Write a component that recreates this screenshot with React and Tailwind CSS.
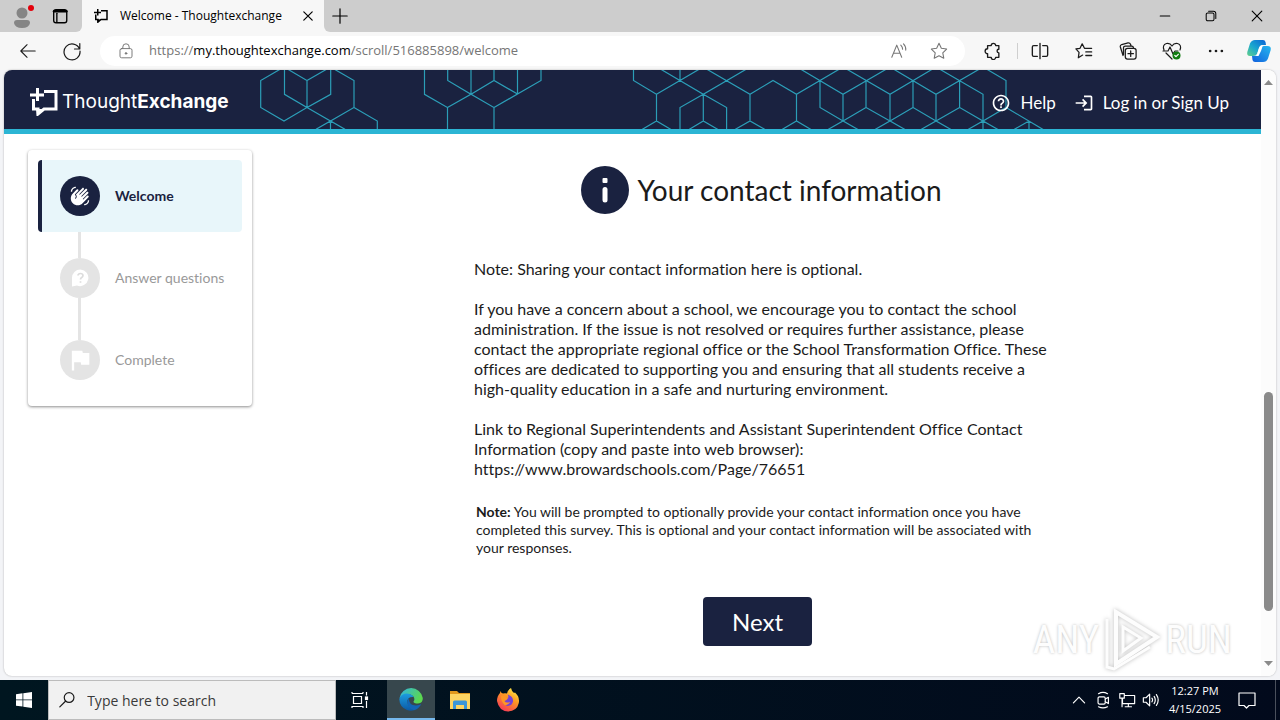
import React from 'react';
import { MdWavingHand, MdFlag, MdHelpOutline, MdLogin } from 'react-icons/md';

const honeycomb = [
  'M284 67L307 80.5V107.5L284 121L260.7 107.5V80.5Z',
  'M307 80.5L330.5 67L354 80.5V107.5L330.5 121L307 107.5',
  'M284.5 66V94.3L307 107.5L330.7 94.3V66',
  'M354 107.5L377.3 121V130M316 129.3L330.5 121L345 129.3M330.5 121V130',
  'M424.5 66V94.3L447.5 107.5V130M447.5 107.5L471 94.3L494 107.5V130M494 107.5L541 80.5V66',
  'M471 66V94.3M447.7 66V80.5L471 94.3L494 80.5L517.5 94M494 66V80.5M517.5 66V94',
  'M471 94.3L447.5 107.5M633.5 66V80.5L656.5 94.3V121M656.5 94.3L703 67M680 66V80.5M657 67L703.3 94.3L750 67',
  'M703 67L750 94.3L773 80.5L796.5 94.3L843 67M703.3 94.3L680 107.5V130M703.3 94.3V121M703.3 94.3L726.6 107.5V130M750 94.3V121M796.5 94.3V121',
  'M797 67L843 94.3L890 67M843 67L890 94.3L936 67M890 67L936 94.3L983 67M936 67L983 94.3V130M983 67L1006 80.5V107.5',
  'M820 80.5V107.5L843 121V94.3M866 80.5V107.5L890 121V94.3M913 80.5V107.5L936 121V94.3M959.6 80.5V107.5L983 121L1006 107.5L1044 130',
  'M843 121L866 107.5M890 121L913 107.5M936 121L959.6 107.5M1029 121V130',
  'M642 129.5L656.5 121L671 129.5M689 129.5L703.3 121L718 129.5M735 129.5L750 121L765 129.5M782 129.5L796.5 121L811 129.5',
  'M828 129.5L843 121L858 129.5M875 129.5L890 121L905 129.5M921 129.5L936 121L951 129.5M968 129.5L983 121L998 129.5M1014 129.5L1029 121',
].join('');

function Icon({ size = 20, width = 1.2, children }) {
  return (
    <svg
      width={size}
      height={size}
      viewBox="0 0 20 20"
      fill="none"
      stroke="currentColor"
      strokeWidth={width}
      strokeLinecap="round"
      strokeLinejoin="round"
      aria-hidden="true"
    >
      {children}
    </svg>
  );
}

function ExchangeMark({ className }) {
  return (
    <svg viewBox="0 0 28 28" fill="none" stroke="currentColor" strokeWidth="3" className={className} aria-hidden="true">
      <path d="M7.500 0V13M0 7H14M14 3.500H26V21H14L8 26V21H3.500V11" />
      <path d="M6 21H14L7 28Z" fill="currentColor" stroke="none" />
    </svg>
  );
}

function ToolButton({ label, children }) {
  return (
    <button type="button" aria-label={label} className="flex h-9 w-11 items-center justify-center text-[#1b1b1b]">
      {children}
    </button>
  );
}

function TabStrip() {
  return (
    <div className="flex h-8 shrink-0 bg-[#f7f7f7]">
      <div className="flex w-[82px] items-center rounded-br-md bg-[#cdcdcd]">
        <button type="button" aria-label="Profile" className="flex w-11 justify-center">
          <svg width="24" height="28" viewBox="0 0 24 28" aria-hidden="true">
            <circle cx="12" cy="11" r="5.500" fill="#858585" />
            <path d="M4 21q0-3 3-3h10q3 0 3 3q-1 5-8 5t-8-5z" fill="#858585" />
            <circle cx="21" cy="6" r="3" fill="#e3000b" />
          </svg>
        </button>
        <button type="button" aria-label="Tab actions menu" className="flex w-8 justify-center text-black">
          <Icon size={18} width={1.500}>
            <rect x="3" y="3" width="14.500" height="14.500" rx="2.500" />
            <path d="M3.500 4.700H17" strokeWidth="3" />
            <path d="M6.500 7V17" />
          </Icon>
        </button>
      </div>
      <div className="flex w-[242px] items-center pl-3 pr-2">
        <ExchangeMark className="size-3.5 shrink-0 text-black" />
        <span className="ml-3 flex-1 whitespace-nowrap text-[12px] text-black">Welcome - Thoughtexchange</span>
        <button type="button" aria-label="Close tab" className="flex size-4 items-center justify-center">
          <Icon size={12} width={2}>
            <path d="M3 3L17 17M17 3L3 17" />
          </Icon>
        </button>
      </div>
      <div className="flex flex-1 items-center rounded-bl-md bg-[#cdcdcd] text-black">
        <button type="button" aria-label="New tab" className="flex w-8 justify-center">
          <Icon size={16} width={1.500}>
            <path d="M10 1V19M1 10H19" />
          </Icon>
        </button>
        <div className="ml-auto flex">
          <button type="button" aria-label="Minimize" className="flex w-[46px] justify-center">
            <Icon size={12} width={1.700}>
              <path d="M2 10H18" />
            </Icon>
          </button>
          <button type="button" aria-label="Restore" className="flex w-[46px] justify-center">
            <Icon size={12} width={1.700}>
              <rect x="2" y="5" width="13" height="13" rx="2.500" />
              <path d="M6 2H14Q18 2 18 6V14" />
            </Icon>
          </button>
          <button type="button" aria-label="Close" className="flex w-[46px] justify-center">
            <Icon size={12} width={1.900}>
              <path d="M2 2L18 18M18 2L2 18" />
            </Icon>
          </button>
        </div>
      </div>
    </div>
  );
}

function Toolbar() {
  return (
    <div className="flex h-[38px] shrink-0 items-center bg-[#f7f7f7] pl-1.5">
      <ToolButton label="Back">
        <Icon size={18}>
          <path d="M18 10H2M9 3L2 10L9 17" />
        </Icon>
      </ToolButton>
      <ToolButton label="Refresh">
        <Icon>
          <path d="M17.500 8A8 8 0 1 0 18 10M17.800 2.500V8H12.500" />
        </Icon>
      </ToolButton>
      <div className="ml-1.5 flex h-[30px] flex-1 items-center rounded-full bg-white pl-[18px] pr-3.5 text-[#767676]">
        <Icon size={16}>
          <rect x="2.500" y="7" width="15" height="11.500" rx="2" />
          <path d="M6 7V5a4 4 0 0 1 8 0V7" />
          <circle cx="10" cy="13" r="1" fill="currentColor" />
        </Icon>
        <div className="ml-[15px] flex-1 whitespace-nowrap text-[13px]">
          https://<span className="text-black">my.thoughtexchange.com</span>/scroll/516885898/welcome
        </div>
        <button type="button" aria-label="Read aloud" className="flex w-10 justify-center">
          <Icon size={18}>
            <path d="M2 17L7.500 3.500L13 17M4 12.500H11M12 3.500Q14 5.500 14 8M15 2Q18 5 17.500 9" />
          </Icon>
        </button>
        <button type="button" aria-label="Add to favorites" className="ml-2 flex w-6 justify-center">
          <Icon size={18}>
            <path d="M10 1.500L12.600 7L18.500 7.800L14.200 12L15.300 18L10 15.200L4.700 18L5.800 12L1.500 7.800L7.400 7Z" />
          </Icon>
        </button>
      </div>
      <div className="ml-1.5 flex items-center">
        <ToolButton label="Extensions">
          <Icon size={18} width={1.500}>
            <path d="M4 4H8A2.500 2.500 0 0 1 13 4H16.500V8A2 2 0 0 0 16.500 12V17H13A2.500 2.500 0 0 1 8 17H4V13A2.500 2.500 0 0 1 4 7.500Z" />
          </Icon>
        </ToolButton>
        <span className="ml-0.5 h-4 w-px bg-[#cfcfcf]" />
        <ToolButton label="Split screen">
          <Icon size={18} width={1.500}>
            <path d="M7 4H3Q1.500 4 1.500 5.500V14.500Q1.500 16 3 16H7M13 4H17Q18.500 4 18.500 5.500V14.500Q18.500 16 17 16H13M10 1.500V18.500" />
          </Icon>
        </ToolButton>
        <ToolButton label="Favorites">
          <Icon size={18} width={1.400}>
            <path d="M12 7H10.500L8 2L5.600 7L1 7.700L4.500 11.500L3.700 17.500L8.500 14.500M12 7H18.500M12 11H18.500M12 15H18.500" />
          </Icon>
        </ToolButton>
        <ToolButton label="Collections">
          <Icon size={18} width={1.400}>
            <rect x="7" y="7" width="12" height="12" rx="2.500" />
            <path d="M13 10V16M10 13H16M4.500 15L1.500 5.500Q1 3.500 3 2.800L10 1Q12 .7 12.800 2.500L13.300 4M5 14V6.500Q5 4.500 7 4.500H14Q16 4.500 16 6.500" />
          </Icon>
        </ToolButton>
        <ToolButton label="Browser essentials">
          <Icon width={1.200}>
            <path d="M2 9Q0 4 4.500 2.500Q8 1.800 10 5Q12 1.800 15.500 2.500Q20 4 18 9M4 12L10 18M1 10H6L8 6L11 13L13 10H16" />
            <circle cx="14.500" cy="14.500" r="4" fill="#107c10" stroke="none" />
            <path d="M12.800 14.500L14 15.700L16.300 13.300" stroke="#fff" />
          </Icon>
        </ToolButton>
        <ToolButton label="Settings and more">
          <Icon size={18}>
            <g fill="currentColor" stroke="none">
              <circle cx="3.500" cy="10" r="1.500" />
              <circle cx="10" cy="10" r="1.500" />
              <circle cx="16.500" cy="10" r="1.500" />
            </g>
          </Icon>
        </ToolButton>
        <button type="button" aria-label="Copilot" className="flex w-[42px] justify-center">
          <svg width="26" height="26" viewBox="0 0 26 26" aria-hidden="true">
            <defs>
              <linearGradient id="copilotA" x1="0" y1="1" x2="1" y2="0">
                <stop offset="0" stopColor="#63d08a" />
                <stop offset=".45" stopColor="#19a7cf" />
                <stop offset="1" stopColor="#0b62d6" />
              </linearGradient>
              <linearGradient id="copilotB" x1="0" y1="1" x2="1" y2="0">
                <stop offset="0" stopColor="#1160dd" />
                <stop offset="1" stopColor="#26b7ef" />
              </linearGradient>
            </defs>
            <path d="M9 2H17Q19 2 19.500 4L20 7H17Q14 7 13 10L11 16Q10 18 7 18H4Q.5 18 1.300 14L4 5.500Q5.500 2 9 2Z" fill="url(#copilotA)" />
            <path d="M17 24H9Q7 24 6.500 22L6 18H8Q11 18 12 15L14 10Q15 8 18 8H21.500Q25.500 8 24.700 12L22 20.500Q20.500 24 17 24Z" fill="url(#copilotB)" />
            <path d="M13 10Q14 7 17 7L15 13L12.500 18H9Q11 17.500 11.500 15Z" fill="#fff" />
          </svg>
        </button>
      </div>
    </div>
  );
}

function SiteHeader() {
  return (
    <header className="relative flex h-16 shrink-0 items-center overflow-hidden border-b-[5px] border-[#2cb5d4] bg-[#1a2240] pl-[26px] pr-8 text-white">
      <svg
        className="absolute left-0 top-0"
        width="1257"
        height="59"
        viewBox="4 70 1257 59"
        fill="none"
        stroke="#2fb4cc"
        strokeOpacity=".85"
        strokeWidth="1.200"
        aria-hidden="true"
      >
        <path d={honeycomb} />
      </svg>
      <a href="#home" className="relative mt-1 flex items-center">
        <ExchangeMark className="size-7" />
        <span className="ml-1 font-[Inter,sans-serif] text-[19px] leading-7">
          Thought<b>Exchange</b>
        </span>
      </a>
      <nav className="relative ml-auto mt-1.5 flex items-center gap-[18px] text-[17px]">
        <a href="#help" className="flex items-center gap-[9px]">
          <MdHelpOutline size={20} />
          Help
        </a>
        <a href="#login" className="flex items-center gap-[9px]">
          <MdLogin size={20} />
          Log in or Sign Up
        </a>
      </nav>
    </header>
  );
}

function Progress() {
  return (
    <ol className="w-56 shrink-0 self-start rounded bg-white px-2.5 pb-[26px] pt-2.5 text-[14px] text-[#999] shadow-[0_1px_3px_rgba(0,0,0,0.45)]">
      <li className="flex h-[72px] items-center gap-[15px] rounded-sm border-l-4 border-[#1a2240] bg-[#e8f6fa] pl-[18px] font-bold text-[#1a2240]">
        <span className="flex size-10 items-center justify-center rounded-full bg-[#1a2240] text-white">
          <MdWavingHand size={20} />
        </span>
        <span className="pb-0.5">Welcome</span>
      </li>
      <li>
        <div className="ml-10 h-[26px] w-[3px] bg-[#e4e4e4]" />
        <div className="flex items-center gap-[15px] pl-[22px]">
          <span className="flex size-10 items-center justify-center rounded-full bg-[#e4e4e4]">
            <svg width="20" height="20" viewBox="0 0 20 20" aria-hidden="true">
              <path d="M10.500 1.500A8.300 8.300 0 1 1 7 17.500L2 18.500V10A8.300 8.300 0 0 1 10.500 1.500Z" fill="#fff" />
              <path d="M8 7.500Q8.200 5.500 10.500 5.500T13 7.500Q13 8.700 11.700 9.500T10.500 11.500M10.500 13.300V14.700" fill="none" stroke="#dcdcdc" strokeWidth="1.700" />
            </svg>
          </span>
          <span className="pb-0.5">Answer questions</span>
        </div>
      </li>
      <li>
        <div className="ml-10 h-[42px] w-[3px] bg-[#e4e4e4]" />
        <div className="flex items-center gap-[15px] pl-[22px]">
          <span className="flex size-10 items-center justify-center rounded-full bg-[#e4e4e4] text-white">
            <MdFlag size={28} />
          </span>
          <span className="pb-0.5">Complete</span>
        </div>
      </li>
    </ol>
  );
}

function Welcome() {
  return (
    <main className="flex flex-1 flex-col items-center pl-0.5 pt-4 text-[#1b1b1b]">
      <h1 className="flex items-center gap-2 pl-2 text-[28px] leading-[48px]">
        <svg width="48" height="48" viewBox="0 0 48 48" aria-hidden="true">
          <circle cx="24" cy="24" r="24" fill="#1a2240" />
          <rect x="21.500" y="12" width="5" height="5" rx="1" fill="#fff" />
          <rect x="21.500" y="21" width="5" height="15.500" rx="2.500" fill="#fff" />
        </svg>
        Your contact information
      </h1>
      <div className="mt-[45px] w-[567px]">
        <div className="-mr-5 flex flex-col gap-5 text-[16px] leading-5">
          <p>Note: Sharing your contact information here is optional.</p>
          <p>
            If you have a concern about a school, we encourage you to contact the school administration. If the issue
            is not resolved or requires further assistance, please contact the appropriate regional office or the
            School Transformation Office. These offices are dedicated to supporting you and ensuring that all students
            receive a <span className="whitespace-nowrap">high-quality</span> education in a safe and nurturing
            environment.
          </p>
          <p>
            Link to Regional Superintendents and Assistant Superintendent Office Contact Information (copy and paste
            into web browser): https://www.browardschools.com/Page/76651
          </p>
        </div>
        <p className="mt-6 pl-0.5 text-[14px] leading-[18px]">
          <b>Note:</b> You will be prompted to optionally provide your contact information once you have completed
          this survey. This is optional and your contact information will be associated with your responses.
        </p>
      </div>
      <button type="button" className="mt-10 h-[49px] w-[109px] rounded bg-[#1a2240] text-[24px] text-white">
        Next
      </button>
    </main>
  );
}

function Scrollbar() {
  return (
    <div className="flex w-[15px] shrink-0 flex-col items-center bg-[#fcfcfc] py-2.5 text-[#8a8a8a]">
      <svg width="9" height="5" viewBox="0 0 9 5" fill="currentColor" aria-hidden="true">
        <path d="M0 5L4.500 0L9 5Z" />
      </svg>
      <div className="flex w-full flex-1 flex-col items-center">
        <div className="flex-[307]" />
        <div className="w-[9px] flex-[219] rounded-full bg-[#8a8a8a]" />
        <div className="flex-[50]" />
      </div>
      <svg width="9" height="5" viewBox="0 0 9 5" fill="currentColor" aria-hidden="true">
        <path d="M0 0L4.500 5L9 0Z" />
      </svg>
    </div>
  );
}

function Watermark() {
  return (
    <div className="pointer-events-none absolute bottom-1 right-11 flex items-center gap-1 font-['Roboto_Condensed',Roboto,sans-serif] text-[39px] leading-none text-[#fdfdfd] [text-shadow:0_0_3px_#bbb]">
      <span>ANY</span>
      <svg width="58" height="64" viewBox="0 0 58 64" fill="none" stroke="#fdfdfd" strokeWidth="4" className="drop-shadow-[0_0_2px_#bbb]" aria-hidden="true">
        <path d="M13 4L54 29L13 56Z" />
        <path d="M20 19V43L38 30Z" strokeWidth="3" />
        <path d="M4 11V59L11 61L47 39" strokeWidth="3" />
      </svg>
      <span>RUN</span>
    </div>
  );
}

function Taskbar() {
  return (
    <footer className="flex h-10 shrink-0 items-center bg-linear-to-r from-[#001620] to-[#020a1c] text-white">
      <button type="button" aria-label="Start" className="flex w-12 justify-center">
        <svg width="16" height="16" viewBox="0 0 16 16" fill="#fff" aria-hidden="true">
          <path d="M0 2.200L6.500 1.300V7.500H0ZM7.300 1.200L16 0V7.500H7.300ZM0 8.300H6.500V14.600L0 13.700ZM7.300 8.300H16V16L7.300 14.700Z" />
        </svg>
      </button>
      <label className="flex h-10 w-72 items-center border border-[#bcbcbc] bg-[#f1f1f1] pl-2.5 text-[#1b1b1b]">
        <Icon size={18} width={1.500}>
          <circle cx="12.500" cy="7" r="6" />
          <path d="M8 11.500L1 18.500" />
        </Icon>
        <input
          type="text"
          aria-label="Search"
          placeholder="Type here to search"
          className="ml-3 w-full bg-transparent text-[14px] placeholder-[#3a3a3a] outline-none"
        />
      </label>
      <button type="button" aria-label="Task view" className="flex w-[51px] justify-center pr-1">
        <svg width="18" height="18" viewBox="0 0 18 18" fill="none" stroke="#fff" strokeWidth="1.200" aria-hidden="true">
          <path d="M1 2.500V1M1 2.500H12M12 1V2.500M1 17V15.500H12V17M2.500 5.500H10.500V12.500H2.500ZM15.500 1V4.500M15.500 10V17" />
          <rect x="14.500" y="6" width="2" height="2.500" fill="#fff" />
        </svg>
      </button>
      <button type="button" aria-label="Microsoft Edge" className="flex h-10 w-12 items-center justify-center border-b-2 border-[#76b9ed] bg-[#37474d]">
        <svg width="24" height="24" viewBox="0 0 24 24" aria-hidden="true">
          <defs>
            <linearGradient id="edgeTop" x1="0" y1="0" x2="1" y2=".4">
              <stop offset="0" stopColor="#2fb3e8" />
              <stop offset="1" stopColor="#5bd84f" />
            </linearGradient>
            <linearGradient id="edgeSide" x1="0" y1="0" x2="0" y2="1">
              <stop offset="0" stopColor="#1c9de0" />
              <stop offset="1" stopColor="#0c59a4" />
            </linearGradient>
          </defs>
          <path d="M.5 11A11.800 11.800 0 0 1 23.800 11Q24 16 19 16.500Q14.500 16.500 14.500 14.500Q16.500 12 14 9Q8 4 .5 11Z" fill="url(#edgeTop)" />
          <path d="M.3 12Q2 6.500 8 6.500Q13.500 7 14.500 10Q9 9.500 8.300 14Q8.500 20.500 15.500 23Q12 24.500 8 23Q.5 20 .3 12Z" fill="url(#edgeSide)" />
          <path d="M10 11.500Q9.500 18 17 18.500Q20.500 18.300 22.300 17Q19.500 22.500 15 23.200Q8.500 21.500 8.300 15Q8.500 12.500 10 11.500Z" fill="#1265b5" />
        </svg>
      </button>
      <button type="button" aria-label="File Explorer" className="flex w-[49px] justify-center">
        <svg width="22" height="20" viewBox="0 0 22 20" aria-hidden="true">
          <path d="M1 1H8L10 3H21V8H1Z" fill="#e0981c" />
          <path d="M1 4H21V19H1Z" fill="#fcd462" />
          <path d="M4 19V12Q4 10.500 5.500 10.500H16.500Q18 10.500 18 12V19H15V15H7V19Z" fill="#3a96d8" />
        </svg>
      </button>
      <button type="button" aria-label="Firefox" className="flex w-12 justify-center">
        <svg width="24" height="24" viewBox="0 0 24 24" aria-hidden="true">
          <defs>
            <linearGradient id="fox" x1=".8" y1="0" x2=".2" y2="1">
              <stop offset="0" stopColor="#fff04a" />
              <stop offset=".4" stopColor="#ff9a22" />
              <stop offset="1" stopColor="#f5315c" />
            </linearGradient>
          </defs>
          <path d="M1 13Q1 8 4 5L4.500 3Q5 5 7 5.500Q9 5 11 5.500Q11.500 2 15 0Q15.500 3 18 5L19 4.500Q24 9 22.800 15Q21 23 12 23.500Q3 23 1 13Z" fill="url(#fox)" />
          <path d="M7 10Q9 9 12 10Q13 8 11.500 6.500Q17.500 8 17 13.500Q16 18 11.500 18Q7 17 6.500 13.500Z" fill="#7543d6" />
          <path d="M5 8Q9 7 12 10.500Q10 12.500 8.500 13Q10 15.500 14 14Q12 18 8.500 17Q5 14 5 8Z" fill="#ff9723" />
        </svg>
      </button>
      <div className="ml-auto flex items-center">
        <button type="button" aria-label="Show hidden icons" className="flex w-6 justify-center">
          <Icon size={14} width={1.700}>
            <path d="M2 14L10 6L18 14" />
          </Icon>
        </button>
        <button type="button" aria-label="Meet Now" className="flex w-6 justify-center">
          <Icon size={18} width={1.300}>
            <rect x="4.500" y="6.500" width="8" height="8" rx="1.500" />
            <path d="M12.500 9L16 7V14L12.500 12M5 3Q10 0 15 3M5 17.500Q10 20 15 17.500" />
          </Icon>
        </button>
        <button type="button" aria-label="Network" className="flex w-6 justify-center">
          <Icon size={18} width={1.300}>
            <path d="M7 5H18.500V14H5V8M2 3H7V8H2ZM4.500 8V17.500M11.500 14V17.500M8 17.500H15" />
          </Icon>
        </button>
        <button type="button" aria-label="Volume" className="flex w-6 justify-center">
          <Icon size={18} width={1.300}>
            <path d="M1.500 7.500H4.500L8.500 3.500V16.500L4.500 12.500H1.500ZM11 8Q12.500 10 11 12M13.500 6Q16 10 13.500 14M16 4Q20 10 16 16" />
          </Icon>
        </button>
        <div className="w-16 text-center text-[11px] leading-[18px]">
          <div>12:27 PM</div>
          <div>4/15/2025</div>
        </div>
        <button type="button" aria-label="Notifications" className="flex w-10 justify-center">
          <Icon size={20}>
            <path d="M2 3H18V15.500H12L9.500 18L7 15.500H2Z" />
          </Icon>
        </button>
        <span className="ml-2 mr-1 h-10 w-px bg-[#4a505c]" />
      </div>
    </footer>
  );
}

export default function App() {
  return (
    <div className="flex h-screen flex-col overflow-hidden bg-[#f3f4f7] font-['Open_Sans',sans-serif]">
      <TabStrip />
      <Toolbar />
      <div className="relative mx-1 mb-1 flex min-h-0 flex-1 overflow-hidden rounded-lg bg-white font-[Lato,sans-serif] [font-variant-ligatures:none] shadow-[0_0_2px_rgba(0,0,0,0.3)]">
        <div className="flex min-w-0 flex-1 flex-col">
          <SiteHeader />
          <div className="flex min-h-0 flex-1 pl-6 pt-4">
            <Progress />
            <Welcome />
          </div>
        </div>
        <Scrollbar />
        <Watermark />
      </div>
      <Taskbar />
    </div>
  );
}
